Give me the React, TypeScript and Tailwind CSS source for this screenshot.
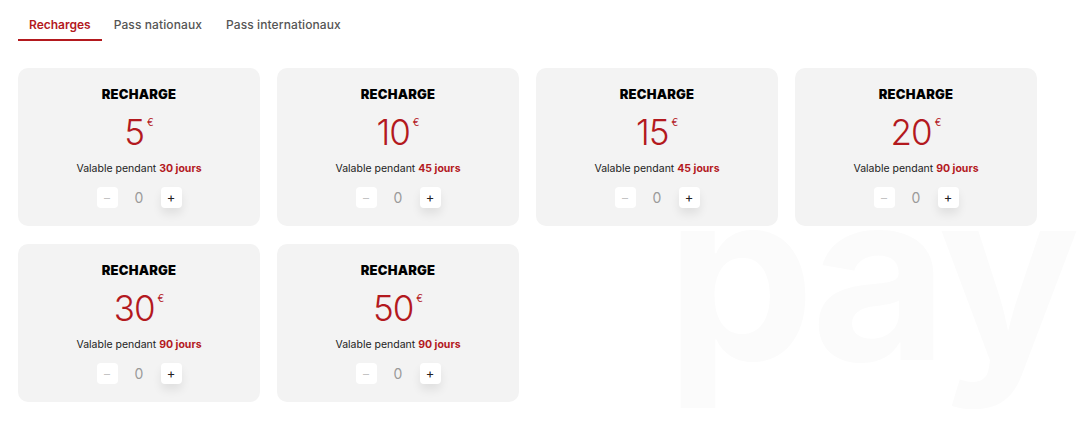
import React from "react";

const offers = [
  { amount: 5, days: 30 },
  { amount: 10, days: 45 },
  { amount: 15, days: 45 },
  { amount: 20, days: 90 },
  { amount: 30, days: 90 },
  { amount: 50, days: 90 },
];

const tabs = ["Recharges", "Pass nationaux", "Pass internationaux"];

const OfferCard = ({ amount, days }: { amount: number; days: number }) => {
  return (
    <div className="h-[158px] rounded-[10px] bg-[#f3f3f3] flex flex-col items-center pt-[17px]">
      <div className="text-[13px] leading-[18px] font-black tracking-[0.2px] text-black">
        RECHARGE
      </div>
      <div className="mt-[8px] flex items-start text-[#b3191e]">
        <span className="text-[35px] leading-[42px] font-light tracking-[-1px]">{amount}</span>
        <span className="ml-[3px] mt-[5px] text-[10px] leading-[12px]">€</span>
      </div>
      <div className="mt-[8px] text-[10.5px] leading-[16px] text-[#222]">
        Valable pendant <span className="font-bold text-[#b3191e]">{days} jours</span>
      </div>
      <div className="mt-[10px] flex items-center gap-[17px]">
        <button className="w-[21px] h-[21px] rounded-[4px] bg-white text-[#c4c4c4] text-[12px] leading-none flex items-center justify-center">
          –
        </button>
        <span className="text-[14px] text-[#9a9a9a] w-[9px] text-center">0</span>
        <button className="w-[21px] h-[21px] rounded-[4px] bg-white text-[#222] text-[13px] leading-none flex items-center justify-center shadow-[0_6px_10px_rgba(0,0,0,0.08)]">
          +
        </button>
      </div>
    </div>
  );
};

export default function App() {
  return (
    <div
      className="relative w-[1080px] h-[431px] bg-white overflow-hidden"
      style={{ fontFamily: "Inter, 'Open Sans', sans-serif" }}
    >
      <div
        aria-hidden="true"
        className="absolute left-[666px] top-[156px] text-[236px] leading-[1] font-bold text-[#fbfbfb] select-none tracking-[-6px]"
      >
        pay
      </div>
      <div className="relative px-[18px] pt-[16px]">
        <div className="flex">
          {tabs.map((t, i) => (
            <div
              key={t}
              className={
                i === 0
                  ? "px-[11px] pb-[5px] border-b-2 border-[#b3191e] text-[#b3191e] text-[12px] font-semibold"
                  : "px-[12px] pb-[5px] border-b-2 border-transparent text-[#555] text-[12px] font-medium tracking-[0.1px]"
              }
            >
              {t}
            </div>
          ))}
        </div>
        <div className="mt-[27px] grid grid-cols-[242px_242px_242px_242px] gap-x-[17px] gap-y-[18px]">
          {offers.map((o) => (
            <OfferCard key={o.amount} amount={o.amount} days={o.days} />
          ))}
        </div>
      </div>
    </div>
  );
}
